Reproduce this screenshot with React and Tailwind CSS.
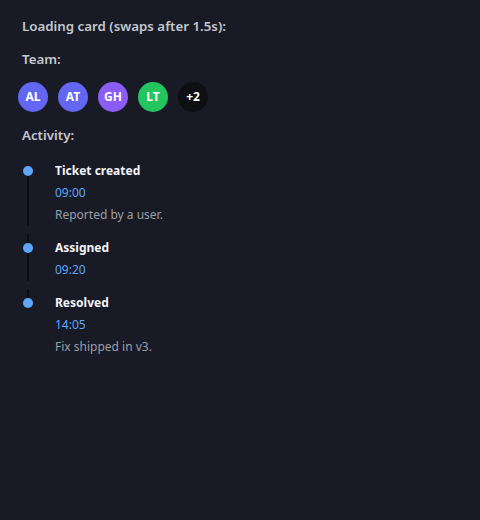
const team = [
  { initials: 'AL', color: 'bg-[#6366f1]' },
  { initials: 'AT', color: 'bg-[#6366f1]' },
  { initials: 'GH', color: 'bg-[#8b5cf6]' },
  { initials: 'LT', color: 'bg-[#22c55e]' },
];

const activity = [
  { title: 'Ticket created', time: '09:00', note: 'Reported by a user.' },
  { title: 'Assigned', time: '09:20' },
  { title: 'Resolved', time: '14:05', note: 'Fix shipped in v3.' },
];

export default function App() {
  return (
    <div className="min-h-screen bg-[#181b26] px-[22px] pt-[16px] font-['Noto_Sans',sans-serif] text-[#c5c8ce]">
      <h2 className="text-[13.3px] font-semibold leading-[20px]">Loading card (swaps after 1.5s):</h2>

      <h3 className="mt-[13px] text-[13.3px] font-semibold leading-[20px]">Team:</h3>
      <div className="mt-[13px] -ml-[4px] flex gap-[10px]">
        {team.map((m) => (
          <div
            key={m.initials}
            className={`flex h-[30px] w-[30px] items-center justify-center rounded-full ${m.color} text-[12px] font-bold text-white`}
          >
            {m.initials}
          </div>
        ))}
        <div className="flex h-[30px] w-[30px] items-center justify-center rounded-full bg-[#0d0f14] text-[12px] font-bold text-white">
          +2
        </div>
      </div>

      <h3 className="mt-[13px] text-[13.3px] font-semibold leading-[20px]">Activity:</h3>
      <ul className="mt-[12px] flex flex-col gap-[8px]">
        {activity.map((a, idx) => {
          const first = idx === 0;
          const last = idx === activity.length - 1;
          return (
            <li key={a.title} className="relative pl-[33px] pt-[3px] text-[12px] leading-[22px]">
              <span
                className={`absolute left-[5px] w-[2px] bg-[#0b0d12] ${first ? 'top-[14px]' : 'top-0'} ${last ? 'h-[14px]' : 'bottom-0'}`}
              />
              <span className="absolute left-[1px] top-[9px] h-[10px] w-[10px] rounded-full bg-[#60a5fa]" />
              <div className="font-bold text-[#f3f4f6]">{a.title}</div>
              <div className="text-[#60a5fa]">{a.time}</div>
              {a.note && <div className="text-[#9a9ea7]">{a.note}</div>}
            </li>
          );
        })}
      </ul>
    </div>
  );
}
